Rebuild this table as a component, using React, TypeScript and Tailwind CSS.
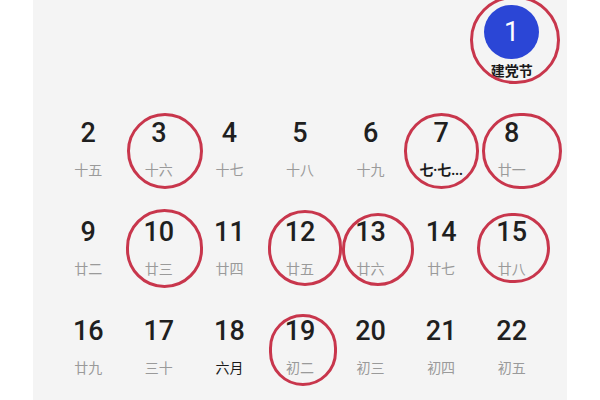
const days = [
  { d: 1, l: "建党节", col: 7, dark: true, today: true, ring: { dx: 3, dy: 40, w: 90, h: 88 } },
  { d: 2, l: "十五" },
  { d: 3, l: "十六", ring: { dx: 6, dy: 52, w: 76, h: 76 } },
  { d: 4, l: "十七" },
  { d: 5, l: "十八" },
  { d: 6, l: "十九" },
  { d: 7, l: "七·七…", dark: true, bold: true, ring: { dx: 0, dy: 52, w: 75, h: 76 } },
  { d: 8, l: "廿一", ring: { dx: 10, dy: 52, w: 80, h: 76 } },
  { d: 9, l: "廿二" },
  { d: 10, l: "廿三", ring: { dx: 6, dy: 50, w: 77, h: 79 } },
  { d: 11, l: "廿四" },
  { d: 12, l: "廿五", ring: { dx: 5, dy: 50, w: 74, h: 76 } },
  { d: 13, l: "廿六", ring: { dx: 7, dy: 51, w: 72, h: 73 } },
  { d: 14, l: "廿七" },
  { d: 15, l: "廿八", ring: { dx: 2, dy: 50, w: 73, h: 70 } },
  { d: 16, l: "廿九" },
  { d: 17, l: "三十" },
  { d: 18, l: "六月", dark: true },
  { d: 19, l: "初二", ring: { dx: 3, dy: 53, w: 68, h: 72 } },
  { d: 20, l: "初三" },
  { d: 21, l: "初四" },
  { d: 22, l: "初五" },
];

type Day = (typeof days)[number];

const Cell = ({ day }: { day: Day }) => {
  const r = (day as any).ring;
  return (
    <div
      className={`relative h-[99px] flex flex-col items-center ${day.col === 7 ? "col-start-7" : ""}`}
    >
      {day.today ? (
        <div className="mt-[5px] w-[55px] h-[54px] rounded-full bg-[#2b46d6] flex items-center justify-center text-white text-[27px] font-normal leading-none font-[Roboto,sans-serif]">
          {day.d}
        </div>
      ) : (
        <div className="mt-[19px] h-[30px] text-[27px] leading-[30px] font-medium text-[#1f1f1f] font-[Roboto,sans-serif]">
          {day.d}
        </div>
      )}
      <div
        className={`absolute top-[62px] left-0 right-0 text-center text-[14px] leading-[18px] ${
          day.dark ? "text-[#1a1a1a]" : "text-[#9a9a9a]"
        } ${day.bold || day.today ? "font-semibold" : ""}`}
      >
        {day.l}
      </div>
      {r && (
        <div
          className="absolute rounded-full border-[3px] border-[#c8364c] pointer-events-none"
          style={{
            width: r.w,
            height: r.h,
            left: `calc(50% + ${r.dx - r.w / 2}px)`,
            top: r.dy - r.h / 2,
          }}
        />
      )}
    </div>
  );
};

export default function App() {
  return (
    <div className="w-[600px] h-[400px] bg-white overflow-hidden">
      <div
        className="ml-[33px] w-[534px] h-[400px] bg-[#f4f4f4] px-[20px]"
        style={{ fontFamily: '"Noto Sans", Roboto, "Noto Sans CJK SC", sans-serif' }}
      >
        <div className="grid grid-cols-7">
          {days.map((day) => (
            <Cell key={day.d} day={day} />
          ))}
        </div>
      </div>
    </div>
  );
}
